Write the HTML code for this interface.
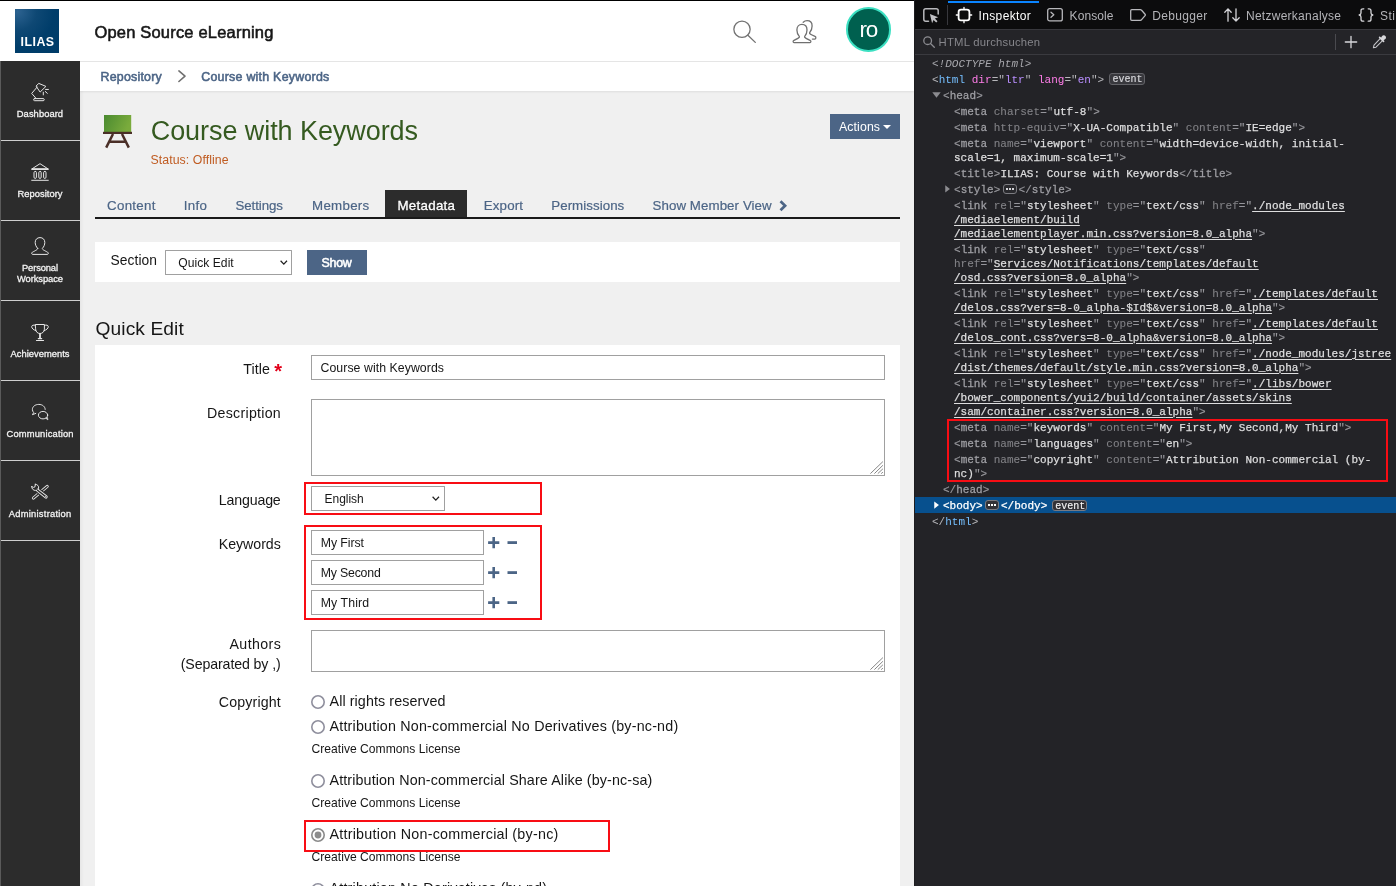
<!DOCTYPE html>
<html lang="en">
<head>
<meta charset="utf-8">
<title>ILIAS: Course with Keywords</title>
<style>
*{box-sizing:border-box}
html,body{margin:0;padding:0}
body{width:1396px;height:886px;overflow:hidden;position:relative;background:#f0f0f0;font-family:"Liberation Sans","DejaVu Sans",sans-serif;color:#161616}
#app{position:absolute;left:0;top:0;width:914px;height:886px;overflow:hidden;background:#f0f0f0}
#app,#dev{will-change:transform}
#app *{position:absolute}
.t{white-space:nowrap;line-height:normal;margin:0;padding:0;font-weight:400;font-style:normal;display:block}
h1.t,h2.t{font-weight:400}
#topline{left:0;top:0;width:914px;height:1px;background:#000}
header{left:0;top:1px;width:914px;height:60px;background:#fff}
#hline{left:0;top:61px;width:914px;height:1px;background:#e6e6e6}
#logo{left:15px;top:9px;width:44px;height:44px;background:radial-gradient(circle at 6% 6%,#2c6290 0%,#0e4874 32%,#003d6a 62%,#003c68 100%)}
#logo b{left:5.6px;top:25.6px;font-size:12.4px;color:#fff;font-weight:700;letter-spacing:0.45px;line-height:normal}
#crumbs{left:80px;top:62px;width:834px;height:29px;background:#fff;box-shadow:0 1px 2px rgba(0,0,0,.08)}
nav#side{left:0;top:61px;width:80px;height:825px;background:#2c2c2c}
nav#side i.sep{left:0;width:80px;height:1px;background:#cfcfcf}
nav#side svg{left:31px;width:18px;height:18px;fill:none;stroke:#e6e6e6;stroke-width:1;stroke-linecap:round;stroke-linejoin:round}
#sideedge{left:0;top:61px;width:1px;height:825px;background:#5a5a5a}
#sideshadow{left:80px;top:91px;width:4px;height:795px;background:linear-gradient(90deg,rgba(0,0,0,.045),rgba(0,0,0,0))}
.panel{background:#fff}
.btn{background:#4c6586}
.inp{background:#fff;border:1px solid #a0a0a0}
.sel{background:#fff;border:1px solid #a0a0a0;border-radius:0.500px}
.red{border:2px solid #f80d14}
svg{overflow:visible}
/* devtools */
#dev{position:absolute;left:914px;top:0;width:482px;height:886px;background:#232327;overflow:hidden;font-family:"Liberation Sans","DejaVu Sans",sans-serif}
#dev *{position:absolute}

#dsplit{left:0;top:0;width:1px;height:886px;background:#1d1d20;z-index:5}
#dtool{left:0;top:0;width:482px;height:29px;background:#0c0c0d}
#dtool:after{content:"";position:absolute;left:0;top:29px;width:482px;height:1px;background:#38383d}
#dtabline{left:34px;top:1px;width:91px;height:2px;background:#0a84ff}
#dtsep{left:33px;top:5px;width:1px;height:20px;background:#38383d}
#dsearch{left:0;top:30px;width:482px;height:24px;background:#242428}
#dsearch:after{content:"";position:absolute;left:0;top:24px;width:482px;height:1px;background:#3a3a3f}
#dssep{left:421px;top:4px;width:1px;height:16px;background:#4a4a4f}
#dsel{left:1px;width:481px;height:16px;background:#07508e}
.mk{left:0;top:0;width:482px;height:886px;font-family:"Liberation Mono","DejaVu Sans Mono",monospace;font-size:11px;letter-spacing:0.022px;color:#8f8f94}
.ln{white-space:pre;line-height:14px;height:14px}
.ln span{position:static !important}
.p{color:#97979c;-webkit-text-stroke:0.15px #97979c}.tg{color:#9f9fa4;-webkit-text-stroke:0.28px #9f9fa4}.an{color:#808085;-webkit-text-stroke:0.1px #808085}
.av,.lk,.tx{color:#dededf;-webkit-text-stroke:0.25px #dededf}
.lk{text-decoration:underline;text-decoration-thickness:1px;text-underline-offset:1.5px}
.dt{color:#a8a8ad;font-style:italic}
.p2{color:#b6b6ba}.tag{color:#75bfff}.atn{color:#ff7de9}.atv{color:#b98eff}
.w{color:#fff;-webkit-text-stroke:0.25px #fff}
.badge{border:1px solid #8a8a8f;border-radius:3px;font-family:"Liberation Mono","DejaVu Sans Mono",monospace;font-size:10px;line-height:11px;color:#d4d4d8;height:10.500px;width:35px;padding:0 0 0 2.200px;white-space:pre;-webkit-text-stroke:0.2px #d4d4d8}
.dots{border:1px solid #7c7c81;border-radius:3px;width:13.800px;height:10px;background:#29292d}
.dots i{top:3.200px;width:1.800px;height:1.800px;background:#d4d4d8}
#dev svg{fill:none;stroke:#b8b8bc;stroke-width:1.3;stroke-linecap:round;stroke-linejoin:round}
</style>
</head>
<body>
<div id="app">
  <div id="topline"></div>
  <header>
    <div id="logo" style="top:8px"><b>ILIAS</b></div>
    <svg style="left:731px;top:18px;width:28px;height:28px" viewBox="0 0 28 28" fill="none" stroke="#727272" stroke-width="1.300" stroke-linecap="round"><circle cx="11" cy="10.300" r="8.150"/><path d="M16.900 16.200 L24.300 23.400"/></svg>
    <svg style="left:780px;top:9px;width:50px;height:40px" viewBox="0 0 50 40" fill="none" stroke="#707070" stroke-width="1.300" stroke-linecap="round" stroke-linejoin="round"><path d="M23.200 12.200C24.300 11.200 25.600 10.700 27.100 10.700C30 10.700 32.100 12.800 32.100 16C32.100 18.800 31 21.200 29.600 22.800C29.200 23.800 30.500 24.400 35 26.400C36.300 27 36 29 34.800 29.100H32.400"/><path d="M19.400 26.600C17.800 24.800 16.900 22.500 16.900 19.900C16.900 16.600 19 14.400 21.900 14.400C24.900 14.400 27 16.600 27 19.900C27 22.500 26.100 24.800 24.600 26.600C24.200 27.600 25.500 28.200 30.300 30.500C31.200 31 31 32.600 30 32.600H14C13 32.600 12.800 31 13.700 30.500C18.500 28.200 19.800 27.600 19.400 26.600Z" fill="#fff"/></svg>
    <div style="left:846px;top:6px;width:44.5px;height:44.5px;border-radius:50%;background:#00604f;border:2.2px solid #3ce0c2"></div>
  </header>
  <div id="hline"></div>
  <div id="crumbs">
    <svg style="left:98px;top:7.500px;width:8px;height:12.400px" viewBox="0 0 8 12.400" fill="none" stroke="#707070" stroke-width="1.600" stroke-linecap="round" stroke-linejoin="round"><path d="M0.900 0.900 L7 6.200 L0.900 11.500"/></svg>
  </div>
  <nav id="side">
    <i class="sep" style="top:79px"></i><i class="sep" style="top:159px"></i><i class="sep" style="top:239px"></i><i class="sep" style="top:319px"></i><i class="sep" style="top:399px"></i><i class="sep" style="top:479px"></i>
    <!-- dashboard -->
    <svg style="top:22px" viewBox="0 0 18 18"><path d="M3.600 15.600h8.600a1.050 1.050 0 0 1 0 2.100H3.600a1.050 1.050 0 0 1 0-2.100z"/><path d="M4.900 15.200 L0.700 10.400 L6.200 4"/><path d="M5.300 2.800 L7.800 0.400 L14.900 3.400 L9.400 8.800 Z"/><path d="M14.600 6.450h2.800M14.300 8.500l2 1.800M12.300 9.200v2.700"/></svg>
    <!-- repository -->
    <svg style="top:102px" viewBox="0 0 18 18"><path d="M0.800 6 L9 0.700 L17.200 6 Z"/><path d="M0.800 6.100H17.200" stroke-width="1.700" stroke-linecap="butt"/><path d="M0.700 17.300h16.600"/><rect x="3" y="8.400" width="2.400" height="7" rx="1.200"/><rect x="7.800" y="8.400" width="2.400" height="7" rx="1.200"/><rect x="12.600" y="8.400" width="2.400" height="7" rx="1.200"/></svg>
    <!-- personal workspace -->
    <svg style="top:176px" viewBox="0 0 18 18"><path d="M6.600 11.300C5.100 9.800 4.200 7.600 4.200 5.400C4.200 2.400 6.200 0.600 9 0.600C11.800 0.600 13.800 2.400 13.800 5.400C13.800 7.600 12.900 9.800 11.400 11.300C11 12.600 13 13.200 16.600 15.200C17.800 15.900 17.500 17.400 16.200 17.400H1.800C0.500 17.400 0.200 15.900 1.400 15.200C5 13.200 7 12.600 6.600 11.300Z"/></svg>
    <!-- achievements -->
    <svg style="top:262px" viewBox="0 0 18 18"><path d="M4.600 1.500H13.400V6.200C13.400 8.800 11.400 10.500 9 10.500C6.600 10.500 4.600 8.800 4.600 6.200Z"/><path d="M4.500 2.300C2.500 1.700 0.700 2.200 0.700 3.700C0.700 5.400 2.600 7 4.900 7.600M13.500 2.300C15.500 1.700 17.300 2.200 17.300 3.700C17.300 5.400 15.400 7 13.100 7.600"/><path d="M9 10.600V15.200" stroke-width="1.800" stroke-linecap="butt"/><path d="M7.300 15.600H10.700M5.500 17.500H12.500" stroke-width="1.200"/></svg>
    <!-- communication -->
    <svg style="top:342px" viewBox="0 0 18 18"><path d="M14.200 6.400C14.200 3.600 11.400 1.400 7.800 1.400C4.200 1.400 1.400 3.600 1.400 6.400C1.400 7.700 1.900 8.800 2.700 9.600L1.400 11.700L4.800 10.400"/><ellipse cx="12.050" cy="12.150" rx="4.650" ry="3.750"/><path d="M14.800 15.300L17 17L16.400 14.200" fill="#e6e6e6" stroke-width="0.500"/></svg>
    <!-- administration -->
    <svg style="top:422px" viewBox="0 0 18 18"><path d="M2.400 15.100L16.200 3.400" stroke-width="3.100"/><path d="M2.400 15.100L16.200 3.400" stroke="#2c2c2c" stroke-width="1.300"/><path d="M5.600 6.400L15.200 14.200" stroke="#2c2c2c" stroke-width="5.400" stroke-linecap="butt"/><path d="M6.600 7.300L15 13.900" stroke-width="3.300"/><path d="M5.600 6.500L15 13.900" stroke="#2c2c2c" stroke-width="1.400"/><circle cx="14.500" cy="13.500" r="0.500" fill="#e6e6e6" stroke="none"/><path d="M4.300 1.200C6.600 1.400 8 3.200 7.600 5.200L7.300 6.300M0.700 3.600C0.600 5.800 2.400 7.600 4.600 7.400L5.600 7.300M4.300 1.200L4 3.800L2.600 4.400L0.700 3.600"/></svg>
  </nav>
  <div id="sideedge"></div>
  <div id="sideshadow"></div>

  <!-- course icon -->
  <svg style="left:103px;top:115px;width:29px;height:33px" viewBox="0 0 29 33"><defs><linearGradient id="g1" x1="0" y1="0" x2="1" y2="0.300"><stop offset="0" stop-color="#4a8a30"/><stop offset="1" stop-color="#7aab3c"/></linearGradient></defs><rect x="1" y="0" width="27.200" height="17" fill="url(#g1)"/><rect x="0" y="16.800" width="29" height="2.200" fill="#4a2f27"/><path d="M10 19 L3.200 32.600 M19 19 L25.800 32.600 M6.600 26.800 H22.400" stroke="#4a2f27" stroke-width="2.500" fill="none"/></svg>

  <!-- actions button -->
  <div class="btn" style="left:830px;top:114px;width:70px;height:25px"></div>
  <svg style="left:883px;top:125px;width:8px;height:4px" viewBox="0 0 8 4"><path d="M0 0h8L4 4z" fill="#fff"/></svg>

  <!-- tabs -->
  <div style="left:385px;top:190px;width:82px;height:28px;background:#2c2c2c"></div>
  <div style="left:95px;top:217px;width:805px;height:2px;background:#1a1a1a"></div>
  <svg style="left:779px;top:199.800px;width:8px;height:11.600px" viewBox="0 0 8 11.600"><path d="M1.500 1.300 L6.100 5.800 L1.500 10.300" fill="none" stroke="#4c6586" stroke-width="2.700"/></svg>

  <!-- section toolbar -->
  <div class="panel" style="left:95px;top:242px;width:805px;height:40px"></div>
  <div class="sel" style="left:165px;top:250px;width:127px;height:25px"></div>
  <svg style="left:279.700px;top:260.200px;width:7.600px;height:5.200px" viewBox="0 0 7.600 5.200"><path d="M0.600 0.800 L3.800 4.100 L7 0.800" fill="none" stroke="#222" stroke-width="1.250"/></svg>
  <div class="btn" style="left:307px;top:250px;width:60px;height:25px"></div>

  <!-- form panel -->
  <div class="panel" style="left:95px;top:345px;width:805px;height:541px"></div>
  <div class="inp" style="left:311px;top:355px;width:574px;height:25px"></div>
  <div class="inp" style="left:311px;top:399px;width:574px;height:77px"></div>
  <svg style="left:870px;top:461px;width:13px;height:13px" viewBox="0 0 13 13"><path d="M0.400 12.600L12.900 0.600M4.400 12.600L12.900 4.300M7.800 12.600L12.900 7.800M11.200 12.600L12.900 11.200" stroke="#808080" stroke-width="0.950" fill="none"/></svg>
  <div class="red" style="left:304px;top:482px;width:238px;height:33px"></div>
  <div class="sel" style="left:311px;top:486px;width:134px;height:25px"></div>
  <svg style="left:432.400px;top:496.200px;width:7.600px;height:5.200px" viewBox="0 0 7.600 5.200"><path d="M0.600 0.800 L3.800 4.100 L7 0.800" fill="none" stroke="#222" stroke-width="1.250"/></svg>
  <div class="red" style="left:304px;top:525px;width:238px;height:95px"></div>
  <div class="inp" style="left:311px;top:530px;width:173px;height:25px"></div>
  <div class="inp" style="left:311px;top:560px;width:173px;height:25px"></div>
  <div class="inp" style="left:311px;top:590px;width:173px;height:25px"></div>
  <svg style="left:488px;top:537px;width:30px;height:71px" viewBox="0 0 30 71" fill="#4c6586"><path d="M4.400 0h2.600v4.300h4.300v2.600H7v4.300H4.400V6.900H0.100V4.300h4.300z"/><rect x="19.500" y="4.200" width="9.500" height="2.800"/><g transform="translate(0 30)"><path d="M4.400 0h2.600v4.300h4.300v2.600H7v4.300H4.400V6.900H0.100V4.300h4.300z"/><rect x="19.500" y="4.200" width="9.500" height="2.800"/></g><g transform="translate(0 60)"><path d="M4.400 0h2.600v4.300h4.300v2.600H7v4.300H4.400V6.900H0.100V4.300h4.300z"/><rect x="19.500" y="4.200" width="9.500" height="2.800"/></g></svg>
  <div class="inp" style="left:311px;top:630px;width:574px;height:42px"></div>
  <svg style="left:870px;top:657px;width:13px;height:13px" viewBox="0 0 13 13"><path d="M0.400 12.600L12.900 0.600M4.400 12.600L12.900 4.300M7.800 12.600L12.900 7.800M11.200 12.600L12.900 11.200" stroke="#808080" stroke-width="0.950" fill="none"/></svg>
  <svg class="rad" style="left:311px;top:695px;width:14px;height:14px" viewBox="0 0 14 14"><circle cx="7" cy="7" r="6.200" fill="#fff" stroke="#8f8f9d" stroke-width="1.600"/></svg>
  <svg class="rad" style="left:311px;top:720px;width:14px;height:14px" viewBox="0 0 14 14"><circle cx="7" cy="7" r="6.200" fill="#fff" stroke="#8f8f9d" stroke-width="1.600"/></svg>
  <svg class="rad" style="left:311px;top:773.9px;width:14px;height:14px" viewBox="0 0 14 14"><circle cx="7" cy="7" r="6.200" fill="#fff" stroke="#8f8f9d" stroke-width="1.600"/></svg>
  <div class="red" style="left:304px;top:819.500px;width:306px;height:32px"></div>
  <svg class="rad" style="left:311px;top:828px;width:14px;height:14px" viewBox="0 0 14 14"><circle cx="7" cy="7" r="6.200" fill="#fff" stroke="#8a8a8a" stroke-width="1.600"/><circle cx="7" cy="7" r="3.400" fill="#8c8c8c"/></svg>
  <svg class="rad" style="left:311px;top:882.5px;width:14px;height:14px" viewBox="0 0 14 14"><circle cx="7" cy="7" r="6.200" fill="#fff" stroke="#8f8f9d" stroke-width="1.600"/></svg>
<span class="t" style="left:94.4px;top:23px;font-size:16.5px;letter-spacing:0.19px;-webkit-text-stroke:0.55px currentColor;">Open Source eLearning</span>
<span class="t" style="left:859.6px;top:17px;font-size:22.5px;color:#ffffff;letter-spacing:-1.42px;">ro</span>
<span class="t" style="left:100.5px;top:69.5px;font-size:12.4px;color:#4c6586;letter-spacing:0.22px;-webkit-text-stroke:0.55px currentColor;">Repository</span>
<span class="t" style="left:201.25px;top:69.5px;font-size:12.4px;color:#4c6586;letter-spacing:0.25px;-webkit-text-stroke:0.55px currentColor;">Course with Keywords</span>
<h1 class="t" style="left:150.75px;top:116px;font-size:27px;color:#355a20;letter-spacing:-0.07px;">Course with Keywords</h1>
<span class="t" style="left:150.5px;top:153px;font-size:12.3px;color:#c05c22;letter-spacing:0.07px;">Status: Offline</span>
<span class="t" style="left:839px;top:119.75px;font-size:12.3px;color:#ffffff;letter-spacing:0.11px;">Actions</span>
<span class="t" style="left:107px;top:198px;font-size:13.3px;color:#4c6586;letter-spacing:0.32px;-webkit-text-stroke:0.2px currentColor;">Content</span>
<span class="t" style="left:183.75px;top:198px;font-size:13.3px;color:#4c6586;letter-spacing:0.35px;-webkit-text-stroke:0.2px currentColor;">Info</span>
<span class="t" style="left:235.5px;top:198px;font-size:13.3px;color:#4c6586;letter-spacing:-0.08px;-webkit-text-stroke:0.2px currentColor;">Settings</span>
<span class="t" style="left:312px;top:198px;font-size:13.3px;color:#4c6586;letter-spacing:0.3px;-webkit-text-stroke:0.2px currentColor;">Members</span>
<span class="t" style="left:397.5px;top:198px;font-size:13.3px;color:#ffffff;letter-spacing:0.29px;-webkit-text-stroke:0.3px currentColor;">Metadata</span>
<span class="t" style="left:483.75px;top:198px;font-size:13.3px;color:#4c6586;letter-spacing:0.16px;-webkit-text-stroke:0.2px currentColor;">Export</span>
<span class="t" style="left:551.25px;top:198px;font-size:13.3px;color:#4c6586;letter-spacing:0.06px;-webkit-text-stroke:0.2px currentColor;">Permissions</span>
<span class="t" style="left:652.5px;top:198px;font-size:13.3px;color:#4c6586;letter-spacing:0.08px;-webkit-text-stroke:0.2px currentColor;">Show Member View</span>
<label class="t" style="left:110.5px;top:253px;font-size:13.8px;letter-spacing:0.08px;">Section</label>
<span class="t" style="left:178.25px;top:256px;font-size:12.1px;letter-spacing:0.04px;">Quick Edit</span>
<span class="t" style="left:321.5px;top:256px;font-size:12.4px;color:#ffffff;letter-spacing:-0.25px;-webkit-text-stroke:0.55px currentColor;">Show</span>
<h2 class="t" style="left:95.5px;top:318px;font-size:19.2px;letter-spacing:0.09px;">Quick Edit</h2>
<label class="t" style="left:243.25px;top:361px;font-size:14.2px;letter-spacing:0.12px;">Title</label>
<span class="t" style="left:274.2px;top:360px;font-size:20px;font-weight:700;color:#e2001a;">*</span>
<label class="t" style="left:207px;top:405px;font-size:14.2px;letter-spacing:0.28px;">Description</label>
<label class="t" style="left:218.75px;top:492px;font-size:14.2px;letter-spacing:-0.16px;">Language</label>
<label class="t" style="left:218.75px;top:536px;font-size:14.2px;letter-spacing:-0.04px;">Keywords</label>
<label class="t" style="left:229.5px;top:635.75px;font-size:14.2px;letter-spacing:0.39px;">Authors</label>
<label class="t" style="left:180.75px;top:656px;font-size:14.2px;letter-spacing:-0.12px;">(Separated by ,)</label>
<label class="t" style="left:218.75px;top:694px;font-size:14.2px;letter-spacing:0.16px;">Copyright</label>
<span class="t" style="left:320.5px;top:361px;font-size:12.3px;letter-spacing:0.06px;">Course with Keywords</span>
<span class="t" style="left:324.5px;top:492px;font-size:12px;letter-spacing:-0.02px;">English</span>
<span class="t" style="left:320.75px;top:536px;font-size:12.3px;letter-spacing:-0.07px;">My First</span>
<span class="t" style="left:320.75px;top:566px;font-size:12.3px;letter-spacing:-0.19px;">My Second</span>
<span class="t" style="left:320.75px;top:596px;font-size:12.3px;letter-spacing:0.09px;">My Third</span>
<span class="t" style="left:329.5px;top:693.25px;font-size:14.3px;letter-spacing:0.09px;">All rights reserved</span>
<span class="t" style="left:329.5px;top:718.25px;font-size:14.3px;letter-spacing:0.2px;">Attribution Non-commercial No Derivatives (by-nc-nd)</span>
<span class="t" style="left:311.5px;top:742px;font-size:12.1px;letter-spacing:0.02px;">Creative Commons License</span>
<span class="t" style="left:329.5px;top:772px;font-size:14.3px;letter-spacing:0.12px;">Attribution Non-commercial Share Alike (by-nc-sa)</span>
<span class="t" style="left:311.5px;top:796px;font-size:12.1px;letter-spacing:0.02px;">Creative Commons License</span>
<span class="t" style="left:329.5px;top:825.75px;font-size:14.3px;letter-spacing:0.24px;">Attribution Non-commercial (by-nc)</span>
<span class="t" style="left:311.5px;top:849.75px;font-size:12.1px;letter-spacing:0.02px;">Creative Commons License</span>
<span class="t" style="left:329.5px;top:880px;font-size:14.3px;letter-spacing:0.21px;">Attribution No Derivatives (by-nd)</span>
<span class="t" style="left:16.8px;top:108.9px;font-size:9.35px;color:#f2f2f2;letter-spacing:0.07px;-webkit-text-stroke:0.3px currentColor;">Dashboard</span>
<span class="t" style="left:17.6px;top:189px;font-size:9.35px;color:#f2f2f2;letter-spacing:0.03px;-webkit-text-stroke:0.3px currentColor;">Repository</span>
<span class="t" style="left:22px;top:262.7px;font-size:9.35px;color:#f2f2f2;letter-spacing:-0.13px;-webkit-text-stroke:0.3px currentColor;">Personal</span>
<span class="t" style="left:17px;top:273.7px;font-size:9.35px;color:#f2f2f2;letter-spacing:-0.07px;-webkit-text-stroke:0.3px currentColor;">Workspace</span>
<span class="t" style="left:10.5px;top:349px;font-size:9.35px;color:#f2f2f2;letter-spacing:0.03px;-webkit-text-stroke:0.3px currentColor;">Achievements</span>
<span class="t" style="left:6.5px;top:429px;font-size:9.35px;color:#f2f2f2;letter-spacing:0.17px;-webkit-text-stroke:0.3px currentColor;">Communication</span>
<span class="t" style="left:8.8px;top:509px;font-size:9.35px;color:#f2f2f2;letter-spacing:0.25px;-webkit-text-stroke:0.3px currentColor;">Administration</span>
</div>
<div id="dev">
<div id="dsplit"></div>
<div id="dtool"><div id="dtabline"></div><div id="dtsep"></div>
<svg style="left:9px;top:7.500px;width:16px;height:16px" viewBox="0 0 16 16"><path d="M5.500 13.300H2.800c-1.100 0-2-.9-2-2V2.800c0-1.100.9-2 2-2h10.400c1.100 0 2 .9 2 2v3.200" stroke-width="1.500"/><path d="M6.900 5.900l8.300 3.300-3.400 1.400 2.700 2.700-1.300 1.300-2.700-2.700-1.400 3.400z" fill="#c0c0c4" stroke="none"/></svg>
<svg style="left:42px;top:7px;width:16px;height:16px" viewBox="0 0 16 16" ><rect x="2.600" y="2.600" width="10.800" height="10.800" rx="2.400" stroke="#fff" stroke-width="1.800"/><path d="M8 0.300v2M8 13.700v2M0.300 8h2M13.700 8h2" stroke="#fff" stroke-width="1.300"/></svg>
<svg style="left:133px;top:8px;width:16px;height:14px" viewBox="0 0 16 14"><rect x="0.700" y="0.700" width="14.600" height="12.200" rx="2"/><path d="M4 4.300 L6.800 6.800 L4 9.300"/></svg>
<svg style="left:216px;top:9px;width:16px;height:12px" viewBox="0 0 16 12"><path d="M1.700 0.700h8.600c.5 0 1 .2 1.300.6L15.300 5.500v.8l-3.700 4.400c-.3.400-.8.600-1.300.600H1.700c-.6 0-1-.4-1-1V1.700c0-.6.400-1 1-1z"/></svg>
<svg style="left:310px;top:8px;width:16px;height:14px" viewBox="0 0 16 14" stroke-width="1.500"><path d="M4 13.200V1M0.800 4.300L4 0.900l3.200 3.400M12 0.800v12.200M8.800 9.700L12 13.100l3.200-3.400" stroke="#d4d4d8"/></svg>
<svg style="left:444px;top:8px;width:16px;height:14px" viewBox="0 0 16 14" stroke-width="1.700"><path d="M5.800 0.800H5c-1.300 0-2 .7-2 2v2.200c0 1-.6 1.700-1.800 2 1.200.3 1.800 1 1.800 2v2.200c0 1.300.7 2 2 2h.8M10.200 0.800h.8c1.300 0 2 .7 2 2v2.200c0 1 .6 1.700 1.800 2-1.200.3-1.800 1-1.800 2v2.200c0 1.300-.7 2-2 2h-.8" stroke="#d4d4d8"/></svg>
</div>
<div id="dsearch"><div id="dssep"></div>
<svg style="left:9px;top:6px;width:13px;height:13px" viewBox="0 0 13 13" stroke-width="1.600"><circle cx="4.650" cy="4.650" r="3.850" stroke="#8c8c91"/><path d="M7.500 7.500L11.300 11.300" stroke="#8c8c91"/></svg>
<svg style="left:431px;top:6px;width:12px;height:12px" viewBox="0 0 12 12" stroke-width="1.500"><path d="M6 0.300v11.400M0.300 6h11.400" stroke="#d7d7db"/></svg>
<svg style="left:458px;top:5px;width:14px;height:14px" viewBox="0 0 14 14"><path d="M8.600 3.200l2.200 2.200-6.800 6.800-2.600.6.600-2.600z" stroke="#c4c4c8" stroke-width="1.100"/><path d="M7.600 2.400l4 4M9.400 3.600l1.200-1.800c.6-.8 1.600-.9 2.200-.3.600.6.500 1.600-.3 2.200L10.600 5" stroke="#d7d7db" stroke-width="1.600" fill="#d7d7db"/></svg>
</div>
<div id="dsel" style="top:497px"></div>
<div class="mk">
<div class="ln" style="left:18px;top:56.75px"><span class="dt">&lt;!DOCTYPE html&gt;</span></div>
<div class="ln" style="left:18px;top:72.75px"><span class="p2">&lt;</span><span class="tag">html</span> <span class="atn">dir</span><span class="p2">="</span><span class="atv">ltr</span><span class="p2">"</span> <span class="atn">lang</span><span class="p2">="</span><span class="atv">en</span><span class="p2">"&gt;</span></div>
<div class="ln" style="left:29px;top:88.75px"><span class="p">&lt;</span><span class="tg">head</span><span class="p">&gt;</span></div>
<div class="ln" style="left:40px;top:104.75px"><span class="p">&lt;</span><span class="tg">meta</span> <span class="an">charset</span><span class="p">="</span><span class="av">utf-8</span><span class="p">"</span><span class="p">&gt;</span></div>
<div class="ln" style="left:40px;top:120.75px"><span class="p">&lt;</span><span class="tg">meta</span> <span class="an">http-equiv</span><span class="p">="</span><span class="av">X-UA-Compatible</span><span class="p">"</span> <span class="an">content</span><span class="p">="</span><span class="av">IE=edge</span><span class="p">"</span><span class="p">&gt;</span></div>
<div class="ln" style="left:40px;top:136.75px"><span class="p">&lt;</span><span class="tg">meta</span> <span class="an">name</span><span class="p">="</span><span class="av">viewport</span><span class="p">"</span> <span class="an">content</span><span class="p">="</span><span class="av">width=device-width, initial-</span></div>
<div class="ln" style="left:40px;top:150.75px"><span class="av">scale=1, maximum-scale=1</span><span class="p">"&gt;</span></div>
<div class="ln" style="left:40px;top:166.75px"><span class="p">&lt;</span><span class="tg">title</span><span class="p">&gt;</span><span class="tx">ILIAS: Course with Keywords</span><span class="p">&lt;/</span><span class="tg">title</span><span class="p">&gt;</span></div>
<div class="ln" style="left:40px;top:182.75px"><span class="p">&lt;</span><span class="tg">style</span><span class="p">&gt;</span><span class="gap" style="display:inline-block;width:18.200px"></span><span class="p">&lt;/</span><span class="tg">style</span><span class="p">&gt;</span></div>
<div class="ln" style="left:40px;top:198.75px"><span class="p">&lt;</span><span class="tg">link</span> <span class="an">rel</span><span class="p">="</span><span class="av">stylesheet</span><span class="p">"</span> <span class="an">type</span><span class="p">="</span><span class="av">text/css</span><span class="p">"</span> <span class="an">href</span><span class="p">="</span><span class="lk">./node_modules</span></div>
<div class="ln" style="left:40px;top:212.75px"><span class="lk">/mediaelement/build</span></div>
<div class="ln" style="left:40px;top:226.75px"><span class="lk">/mediaelementplayer.min.css?version=8.0_alpha</span><span class="p">"&gt;</span></div>
<div class="ln" style="left:40px;top:242.75px"><span class="p">&lt;</span><span class="tg">link</span> <span class="an">rel</span><span class="p">="</span><span class="av">stylesheet</span><span class="p">"</span> <span class="an">type</span><span class="p">="</span><span class="av">text/css</span><span class="p">"</span></div>
<div class="ln" style="left:40px;top:256.75px"><span class="an">href</span><span class="p">="</span><span class="lk">Services/Notifications/templates/default</span></div>
<div class="ln" style="left:40px;top:270.75px"><span class="lk">/osd.css?version=8.0_alpha</span><span class="p">"&gt;</span></div>
<div class="ln" style="left:40px;top:286.75px"><span class="p">&lt;</span><span class="tg">link</span> <span class="an">rel</span><span class="p">="</span><span class="av">stylesheet</span><span class="p">"</span> <span class="an">type</span><span class="p">="</span><span class="av">text/css</span><span class="p">"</span> <span class="an">href</span><span class="p">="</span><span class="lk">./templates/default</span></div>
<div class="ln" style="left:40px;top:300.75px"><span class="lk">/delos.css?vers=8-0_alpha-$Id$&amp;version=8.0_alpha</span><span class="p">"&gt;</span></div>
<div class="ln" style="left:40px;top:316.75px"><span class="p">&lt;</span><span class="tg">link</span> <span class="an">rel</span><span class="p">="</span><span class="av">stylesheet</span><span class="p">"</span> <span class="an">type</span><span class="p">="</span><span class="av">text/css</span><span class="p">"</span> <span class="an">href</span><span class="p">="</span><span class="lk">./templates/default</span></div>
<div class="ln" style="left:40px;top:330.75px"><span class="lk">/delos_cont.css?vers=8-0_alpha&amp;version=8.0_alpha</span><span class="p">"&gt;</span></div>
<div class="ln" style="left:40px;top:346.75px"><span class="p">&lt;</span><span class="tg">link</span> <span class="an">rel</span><span class="p">="</span><span class="av">stylesheet</span><span class="p">"</span> <span class="an">type</span><span class="p">="</span><span class="av">text/css</span><span class="p">"</span> <span class="an">href</span><span class="p">="</span><span class="lk">./node_modules/jstree</span></div>
<div class="ln" style="left:40px;top:360.75px"><span class="lk">/dist/themes/default/style.min.css?version=8.0_alpha</span><span class="p">"&gt;</span></div>
<div class="ln" style="left:40px;top:376.75px"><span class="p">&lt;</span><span class="tg">link</span> <span class="an">rel</span><span class="p">="</span><span class="av">stylesheet</span><span class="p">"</span> <span class="an">type</span><span class="p">="</span><span class="av">text/css</span><span class="p">"</span> <span class="an">href</span><span class="p">="</span><span class="lk">./libs/bower</span></div>
<div class="ln" style="left:40px;top:390.75px"><span class="lk">/bower_components/yui2/build/container/assets/skins</span></div>
<div class="ln" style="left:40px;top:404.75px"><span class="lk">/sam/container.css?version=8.0_alpha</span><span class="p">"&gt;</span></div>
<div class="ln" style="left:40px;top:420.75px"><span class="p">&lt;</span><span class="tg">meta</span> <span class="an">name</span><span class="p">="</span><span class="av">keywords</span><span class="p">"</span> <span class="an">content</span><span class="p">="</span><span class="av">My First,My Second,My Third</span><span class="p">"</span><span class="p">&gt;</span></div>
<div class="ln" style="left:40px;top:436.75px"><span class="p">&lt;</span><span class="tg">meta</span> <span class="an">name</span><span class="p">="</span><span class="av">languages</span><span class="p">"</span> <span class="an">content</span><span class="p">="</span><span class="av">en</span><span class="p">"</span><span class="p">&gt;</span></div>
<div class="ln" style="left:40px;top:452.75px"><span class="p">&lt;</span><span class="tg">meta</span> <span class="an">name</span><span class="p">="</span><span class="av">copyright</span><span class="p">"</span> <span class="an">content</span><span class="p">="</span><span class="av">Attribution Non-commercial (by-</span></div>
<div class="ln" style="left:40px;top:466.75px"><span class="av">nc)</span><span class="p">"&gt;</span></div>
<div class="ln" style="left:29px;top:482.75px"><span class="p">&lt;/</span><span class="tg">head</span><span class="p">&gt;</span></div>
<div class="ln" style="left:29px;top:498.75px"><span class="w">&lt;body&gt;</span><span class="gap" style="display:inline-block;width:18.200px"></span><span class="w">&lt;/body&gt;</span></div>
<div class="ln" style="left:18px;top:514.75px"><span class="p2">&lt;/</span><span class="tag">html</span><span class="p2">&gt;</span></div>
</div>
<svg style="left:18px;top:91.500px;width:9px;height:6px" viewBox="0 0 9 6"><path d="M0.300 0.300h8.400L4.500 5.700z" fill="#8c8c91" stroke="none"/></svg>
<svg style="left:31px;top:185.100px;width:5.200px;height:7.800px" viewBox="0 0 6 9"><path d="M0.300 0.300v8.400L5.700 4.500z" fill="#8c8c91" stroke="none"/></svg>
<svg style="left:19.800px;top:500.900px;width:5.200px;height:8.200px" viewBox="0 0 6 9"><path d="M0.300 0.300v8.400L5.700 4.500z" fill="#fff" stroke="none"/></svg>
<span class="badge" style="left:195.300px;top:73.400px;height:11.500px;width:35.500px;line-height:12.500px;background:#38383d;border-color:#626267">event</span>
<span class="badge" style="left:138px;top:499.500px;height:11px;border-color:#7a7a80;background:#323237;color:#fff">event</span>
<span class="dots" style="left:89px;top:184px"><i style="left:2.200px"></i><i style="left:5.100px"></i><i style="left:8px"></i></span>
<span class="dots" style="left:71px;top:500px;border-color:#7a7a80;background:#323237"><i style="left:2.200px;background:#fff"></i><i style="left:5.100px;background:#fff"></i><i style="left:8px;background:#fff"></i></span>
<div class="red" style="left:33px;top:419px;width:441px;height:63px;border-color:#f80d14"></div>

<span class="t" style="left:64.60000000000002px;top:8.7px;font-size:12px;color:#ffffff;letter-spacing:0.34px;">Inspektor</span>
<span class="t" style="left:155.5999999999999px;top:8.7px;font-size:12px;color:#b4b4b8;letter-spacing:0.07px;">Konsole</span>
<span class="t" style="left:238.20000000000005px;top:8.7px;font-size:12px;color:#b4b4b8;letter-spacing:0.34px;">Debugger</span>
<span class="t" style="left:332px;top:8.7px;font-size:12px;color:#b4b4b8;letter-spacing:0.26px;">Netzwerkanalyse</span>
<span class="t" style="left:466px;top:8.7px;font-size:12px;color:#b4b4b8;letter-spacing:0.4px;">Stilbearbeitung</span>
<span class="t" style="left:24.600000000000023px;top:35.8px;font-size:11.3px;color:#86868b;letter-spacing:0.22px;">HTML durchsuchen</span>
</div>
</body>
</html>
